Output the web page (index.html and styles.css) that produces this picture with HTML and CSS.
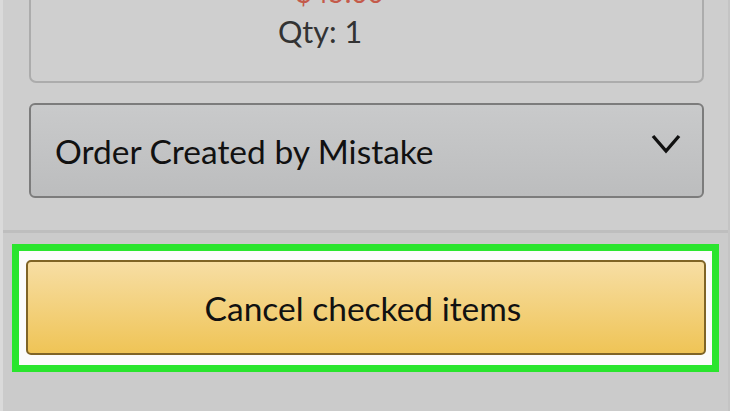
FILE: index.html
```html
<!DOCTYPE html>
<html lang="en">
<head>
  <meta charset="UTF-8">
  <title>Cancel items</title>
  <link rel="stylesheet" href="styles.css">
</head>
<body>
  <div class="page">
    <div class="top">
      <div class="item-card">
        <div class="item-info">
          <div class="price">$45.00</div>
          <div class="qty">Qty: 1</div>
        </div>
      </div>

      <div class="reason-select">
        <span>Order Created by Mistake</span>
        <svg class="chevron" width="30" height="22" viewBox="0 0 30 22">
          <path d="M2 3 L15 18 L28 3" fill="none" stroke="#111" stroke-width="3.4"/>
        </svg>
      </div>
    </div>

    <div class="bottom">
      <div class="highlight">
        <button class="cancel-btn">Cancel checked items</button>
      </div>
    </div>
  </div>
</body>
</html>
```

FILE: styles.css
```css
body {
  margin: 0;
  background-color: #cecece;
  font-family: Lato, "Open Sans", sans-serif;
  overflow: hidden;
}

.page {
  border-left: 3px solid #dadada;
  border-right: 2px solid #c4c4c4;
  height: 411px;
  display: flex;
  flex-direction: column;
}

.top {
  padding: 0 24px 32px 26px;
  border-bottom: 3px solid #bebebe;
}

.item-card {
  margin-top: -40px;
  height: 123px;
  border: 2px solid #acacac;
  border-radius: 7px;
  box-sizing: border-box;
  background-color: #cfcfcf;
}

.item-info {
  padding: 13px 0 0 247px;
}

.price {
  color: #c45a4a;
  font-size: 28px;
  margin-left: 18px;
  line-height: 34px;
}

.qty {
  color: #333;
  font-size: 30.5px;
  line-height: 38px;
  margin-top: 3px;
}

.reason-select {
  margin-top: 20px;
  height: 95px;
  box-sizing: border-box;
  border: 2px solid #7c7c7c;
  border-radius: 6px;
  background: linear-gradient(#c9cacb, #bcbdbe);
  display: flex;
  align-items: center;
  justify-content: space-between;
  padding: 0 21px 0 24px;
  font-size: 33.5px;
  color: #111;
}

.chevron {
  margin-top: -14px;
}

.bottom {
  flex: 1;
  padding: 11px 0 0 9px;
  background-color: #cbcbcb;
}

.highlight {
  width: 707px;
  box-sizing: border-box;
  border: 7px solid #2ae52e;
  background-color: #fbfbfb;
  padding: 9px 6px 10px 7px;
}

.cancel-btn {
  display: block;
  width: 100%;
  height: 95px;
  border: 2px solid #7f6426;
  border-radius: 5px;
  background: linear-gradient(#f7dea4, #efc456);
  font-family: Lato, "Open Sans", sans-serif;
  font-size: 33.5px;
  color: #111;
  padding: 0 6px 0 0;
}
```
